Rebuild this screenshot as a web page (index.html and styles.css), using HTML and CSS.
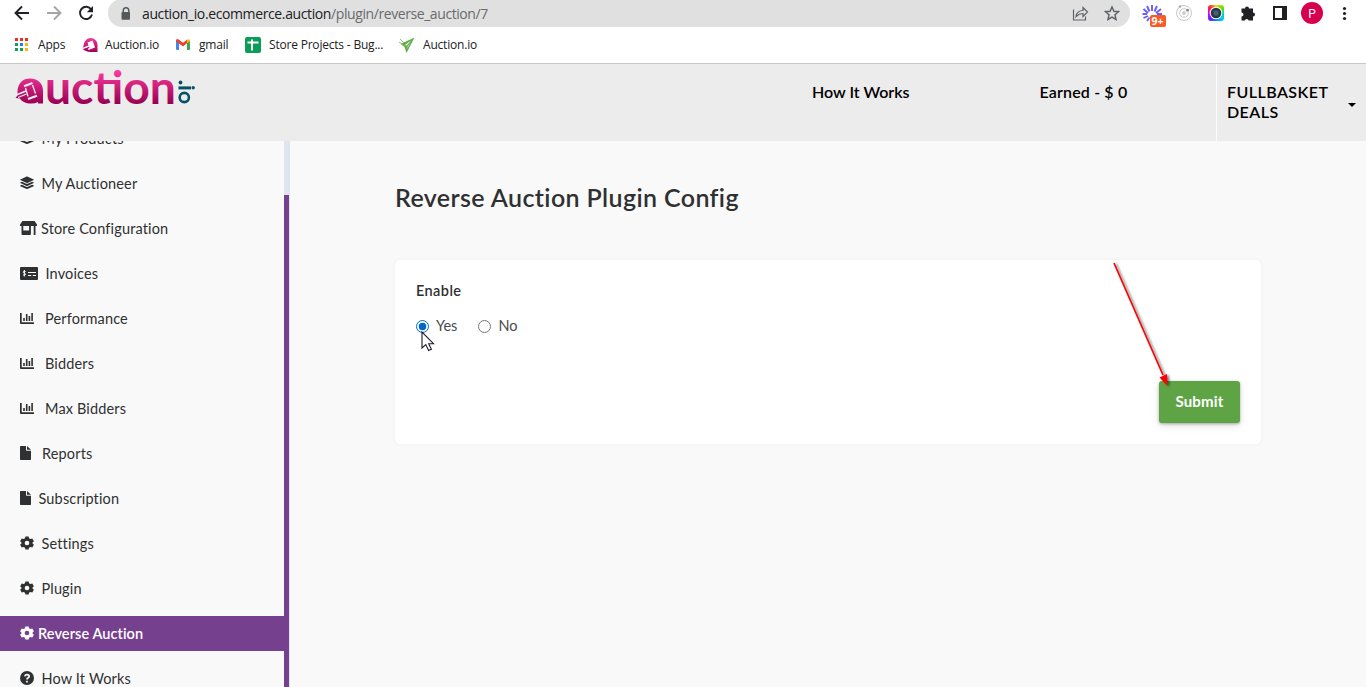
FILE: index.html
```html
<!DOCTYPE html>
<html lang="en">
<head>
<meta charset="utf-8">
<title>Reverse Auction Plugin Config</title>
<link rel="stylesheet" href="styles.css">
</head>
<body>
<svg class="defs" width="0" height="0">
  <symbol id="layers" viewBox="0 0 512 512"><path d="M12 148l232 105q12 5 24 0l232-105q22-12 0-24L268 19q-12-5-24 0L12 124q-22 12 0 24zM500 236l-58-26-158 71q-28 12-56 0L70 210l-58 26q-22 12 0 24l232 105q12 5 24 0l232-105q22-12 0-24zM500 348l-58-26-158 71q-28 12-56 0L70 322l-58 26q-22 12 0 24l232 105q12 5 24 0l232-105q22-12 0-24z"/></symbol>
  <symbol id="store" viewBox="0 0 17 14"><path d="M2.4 0h12.2L17 3.6V5H0V3.6zM1.5 5h1.8v4.6h5.8V5h1.8v8q0 1-1 1H2.5q-1 0-1-1zM13.7 5h1.8v9h-1.8z"/></symbol>
  <symbol id="invoice" viewBox="0 0 18 13"><path d="M1 0h16q1 0 1 1v11q0 1-1 1H1q-1 0-1-1V1q0-1 1-1z"/><path class="cut" d="M8 5.500h8M8 8.500h3.200M12.800 8.500H16M5.600 4.600Q3.2 3.600 3.200 5.100C3.200 6.400 5.600 6 5.600 7.400Q5.400 8.800 3 7.900M4.400 3v6.400"/></symbol>
  <symbol id="chart" viewBox="0 0 14 11"><path d="M0 0h1.7v9.3H14V11H1q-1 0-1-1zM3.2 5h1.6v3H3.2zM5.9 1h1.6v7H5.9zM8.6 3h1.6v5H8.6zM11.3 0h1.6v8h-1.6z"/></symbol>
  <symbol id="file" viewBox="0 0 11 14"><path d="M.7 0H6v4q0 .8.8.8H11v8.5q0 .7-.7.7H.7q-.7 0-.7-.7V.7Q0 0 .7 0zM7 0l4 3.8H7z"/></symbol>
  <symbol id="gear" viewBox="0 0 24 24"><path fill-rule="evenodd" d="M9.2.8h5.6l.7 3.1 2.4 1.4 3.1-1 2.8 4.9L21.500 11.200v1.600l2.300 2.100-2.800 4.900-3.100-1-2.400 1.400-.7 3.100H9.200l-.7-3.100-2.400-1.400-3.100 1L.2 14.900l2.300-2.100v-1.600L.2 9.100 3 4.300l3.100 1L8.500 3.900zM12 8a4 4 0 100 8 4 4 0 000-8z"/></symbol>
  <symbol id="help" viewBox="0 0 14 14"><circle cx="7" cy="7" r="7"/><path class="cut help-mark" d="M4.8 5.4Q5.2 3.600 7 3.600q2.200 0 2.200 1.800C9.200 6.800 7 6.800 7 8.400M7 9.700v1.700"/></symbol>
</svg>

<header class="browser">
  <div class="toolbar">
    <svg class="tool-nav" width="108" height="27" fill="none" stroke="#202124" stroke-width="1.9">
      <path d="M29 13H16M22 6.500L15.500 13l6.500 6.500"/>
      <path stroke="#a4a5a6" d="M47 13h13M54 6.500l6.500 6.500-6.500 6.500"/>
      <path d="M91.200 9.500A6.100 6.100 0 1092 14.500"/><path fill="#202124" stroke="none" d="M93 6v6.200h-6.200z"/>
    </svg>
    <div class="address">
      <svg width="10" height="13" viewBox="0 0 10 13" fill="#55585b"><path fill-rule="evenodd" d="M1.500 5V3.500a3.500 3.500 0 017 0V5Q9 5 9 5.800V12q0 .800-.800.800H1.300Q.5 12.800.5 12V5.800Q.5 5 1.500 5zM3 5h4V3.500a2 2 0 00-4 0z"/></svg>
      <span class="url"><span class="host">auction_io.ecommerce.auction</span>/plugin/reverse_auction/7</span>
      <svg class="address-actions" width="49" height="20" fill="none" stroke="#5f6368" stroke-width="1.200">
        <path d="M1.500 6.500V17h12v-3.500M4 13.500q1-6 7-6V4.500l4.500 4.500-4.500 4.500v-3q-4 0-7 3z"/>
        <path stroke-width="1.500" d="M40 4l1.900 4.300 4.600.4-3.500 3.100 1 4.600-4-2.400-4 2.400 1-4.600-3.500-3.100 4.600-.4z"/>
      </svg>
    </div>
    <svg class="extensions" width="236" height="27">
      <g stroke="#6a5cf6" stroke-width="1.900"><path d="M22 11V5M24.500 11.500l2.500-5.500M26 13l5-4M27 14h5M19.500 11.500L17 6M18 13l-4.500-4M17 14h-4.500M18 16l-4.500 2M19.500 17.500L17 21"/></g>
      <rect x="20" y="15" width="16" height="12" rx="2" fill="#fb5a24"/>
      <text x="21.500" y="25" textLength="12" lengthAdjust="spacingAndGlyphs" class="count">9+</text>
      <g fill="none" stroke="#c9c9c9"><circle cx="54" cy="13" r="7.500"/><circle cx="54" cy="13" r="4.300"/></g><circle cx="54" cy="13" r="2" fill="#cfcfcf"/><circle cx="57.500" cy="10.200" r="1.400" fill="#888"/><circle cx="50" cy="6.500" r="1.300" fill="#aaa"/>
      <foreignObject x="78" y="5" width="16" height="16"><div class="rainbow"></div></foreignObject>
      <circle cx="86" cy="13" r="6.300" fill="#fff"/><circle cx="86" cy="13" r="5.300" fill="#263947"/><circle cx="86" cy="13" r="2.700" fill="#4b5d69"/>
      <path fill="#202124" d="M111.500 8.500h3.500a2 2 0 014 0h4v4a2 2 0 010 4v4h-4.300a2 2 0 00-3.900 0h-3.300v-4a2 2 0 000-4z"/>
      <path fill="none" stroke="#202124" stroke-width="2" d="M144 7h12v12h-12z"/><path fill="#202124" d="M152 6h5v14h-5z"/>
      <circle cx="182" cy="13" r="11" fill="#d6004f"/><text x="182" y="17.500" text-anchor="middle" class="avatar">P</text>
      <g fill="#202124"><circle cx="214.500" cy="8.500" r="1.600"/><circle cx="214.500" cy="13.500" r="1.600"/><circle cx="214.500" cy="18.500" r="1.600"/></g>
    </svg>
  </div>
  <nav class="bookmarks">
    <a class="bm-apps"><svg width="13" height="13"><path fill="#ea2d20" d="M0 0h3v3H0zM5 0h3v3H5zM10 0h3v3h-3z"/><path fill="#12a15b" d="M0 5h3v3H0zM0 10h3v3H0zM5 10h3v3H5z"/><path fill="#1a84f5" d="M5 5h3v3H5z"/><path fill="#fbb60b" d="M10 5h3v3h-3zM10 10h3v3h-3z"/></svg>Apps</a>
    <a class="bm-auction"><svg width="16" height="16" viewBox="0 0 32 32"><use href="#emblem"/></svg>Auction.io</a>
    <a class="bm-gmail"><svg width="14" height="11"><path fill="#4285f4" d="M0 1.500l3 2.200V11H1q-1 0-1-1z"/><path fill="#34a853" d="M11 3.700l3-2.200V10q0 1-1 1h-2z"/><path fill="#ea4335" d="M0 1.500Q.5-.6 2.300.3L7 3.800 11 .8v3.500L7 7.400 0 2.200z"/><path fill="#fbbc04" d="M11 .8q2.500-1.600 3 .7v.8l-3 2z"/></svg>gmail</a>
    <a class="bm-sheet"><svg width="16" height="16"><rect width="16" height="16" rx="2" fill="#0b9d58"/><path d="M2.500 5.500h11M7 2.500v11" stroke="#fff" stroke-width="2"/></svg>Store Projects - Bug...</a>
    <a class="bm-plane"><svg width="16" height="16"><path fill="#62ad48" d="M15.500.5L7.500 16 5.500 9.800 1.500 7z"/><path fill="#fff" d="M12 3.500L6 8l1.500.8z"/><path fill="#fff" d="M12 5L8.800 9.500 8 12z"/><path stroke="#8dbb7c" d="M1 2l4 4M0 5l4 2.500"/></svg>Auction.io</a>
  </nav>
</header>

<header class="site">
  <svg class="logo" width="200" height="60" aria-label="auction.io">
    <defs>
      <linearGradient id="pink" gradientUnits="userSpaceOnUse" x1="0" y1="7" x2="0" y2="40"><stop stop-color="#fc3a9e"/><stop offset="1" stop-color="#970052"/></linearGradient>
      <linearGradient id="pink-mark" x1="0" y1="0" x2="0" y2="1"><stop stop-color="#f5399b"/><stop offset="1" stop-color="#a3005c"/></linearGradient>
      <g id="emblem"><path fill="url(#pink-mark)" d="M3 18C4 8 10 2 17 2c8 0 14 6 14 14v14H18C10 30 4 27 1 23z"/><path fill="#fff" d="M11 11l10-4 4 11-10 4zM0 22l15-6 1 3-14 5zM12 23l13-5 1 3-13 5z"/></g>
    </defs>
    <path fill="url(#pink)" d="M17.500 27C18 19 23 14.500 30 14.500c8 0 13 5 13 12V39.500H38V38q-3 1.500-7 1.500c-5 0-9-1.500-11-5L15.500 34q1-1 2-3z"/>
    <g fill="none" stroke="#f6edf2" stroke-linejoin="round">
      <path stroke-width="1.600" d="M15 31.500l11-4.500"/>
      <path stroke-width="1.100" d="M18 33.500l8.500-3.500"/>
      <path stroke-width="2" d="M24 22.200l8.500-3.200M28 35l9-3.300"/>
      <path stroke-width="1.300" d="M25.500 24l2.500 8.500M32.500 21l3 8.500"/>
    </g>
    <text x="45" y="39.500" textLength="131" lengthAdjust="spacingAndGlyphs" class="wordmark">uction</text>
    <g fill="#075066"><circle cx="180.500" cy="18.500" r="1.900"/><rect x="178.500" y="22.400" width="12.500" height="3"/><circle cx="193.200" cy="23.700" r="1.700"/></g>
    <circle cx="184.300" cy="33.500" r="4.600" fill="none" stroke="#075066" stroke-width="2.600"/>
  </svg>
  <nav class="site-links"><a class="how">How It Works</a><a class="earned">Earned - $ 0</a></nav>
  <div class="account"><span>FULLBASKET<br>DEALS</span><i class="caret"></i></div>
</header>

<div class="body">
  <aside class="sidebar">
    <nav class="menu">
      <a class="wide"><svg width="14" height="14"><use href="#layers"/></svg><span>My Products</span></a>
      <a class="wide"><svg width="14" height="14"><use href="#layers"/></svg><span>My Auctioneer</span></a>
      <a class="tight"><svg width="17" height="14"><use href="#store"/></svg><span>Store Configuration</span></a>
      <a class="wide"><svg width="18" height="13"><use href="#invoice"/></svg><span>Invoices</span></a>
      <a class="wider"><svg width="14" height="11"><use href="#chart"/></svg><span>Performance</span></a>
      <a class="wider"><svg width="14" height="11"><use href="#chart"/></svg><span>Bidders</span></a>
      <a class="wider"><svg width="14" height="11"><use href="#chart"/></svg><span>Max Bidders</span></a>
      <a class="wider"><svg width="11" height="14"><use href="#file"/></svg><span>Reports</span></a>
      <a class="wide"><svg width="11" height="14"><use href="#file"/></svg><span>Subscription</span></a>
      <a class="wide"><svg width="14" height="14"><use href="#gear"/></svg><span>Settings</span></a>
      <a class="wide"><svg width="14" height="14"><use href="#gear"/></svg><span>Plugin</span></a>
      <a class="tight active"><svg width="14" height="14"><use href="#gear"/></svg><span>Reverse Auction</span></a>
      <a class="wide"><svg width="14" height="14"><use href="#help"/></svg><span>How It Works</span></a>
    </nav>
    <div class="scrollbar"><div class="thumb"></div></div>
  </aside>
  <main>
    <h1>Reverse Auction Plugin Config</h1>
    <form class="card">
      <h2>Enable</h2>
      <div class="options">
        <label><input type="radio" name="enable" checked>Yes</label>
        <label><input type="radio" name="enable">No</label>
      </div>
      <button type="button">Submit</button>
    </form>
  </main>
</div>

<svg class="cursor" width="14" height="21"><path d="M1 1v16l3.800-3.400L7.600 19.500l2.800-1.300-2.700-5.500H12.500z" fill="#fff" stroke="#1b1b28" stroke-width="1.100"/></svg>
<svg class="arrow" width="70" height="140"><path d="M4 3l49 112" stroke="#f00" stroke-width="1.700"/><path fill="#f00" d="M57.500 126l-8-8.500 7.500-3.500z"/></svg>
</body>
</html>
```
FILE: styles.css
```css
* { box-sizing: border-box; }
body { margin: 0; height: 687px; overflow: hidden; display: flex; flex-direction: column; background: #f9f9f9; color: #2f3031; font-family: Lato, "Open Sans", sans-serif; position: relative; }
svg { flex: none; display: block; }
.defs { position: absolute; }
.cut { fill: none; stroke: #f9f9f9; stroke-width: 1; }
.help-mark { stroke-width: 1.700; }

.browser { height: 64px; flex: none; background: #fff; border-bottom: 1px solid #c8c8c9; font-family: "Open Sans", sans-serif; color: #202124; }
.toolbar { display: flex; height: 27px; }
.address { width: 1022px; background: #e0e0e0; border-radius: 14px; margin-top: -1px; height: 28px; display: flex; align-items: center; padding: 0 9px 0 13px; }
.url { margin-left: 11px; font-size: 14px; letter-spacing: -.42px; color: #696b6e; white-space: nowrap; }
.host { color: #202124; letter-spacing: -.38px; }
.address-actions { margin-left: auto; }
.count { font: bold 11px "Open Sans", sans-serif; fill: #fff; }
.avatar { font: 12px Roboto, sans-serif; fill: #fff; }
.rainbow { width: 16px; height: 16px; border-radius: 3px; background: conic-gradient(#ffd400, #7fe000 12%, #00d890 25%, #00c8ff 37%, #0080ff 50%, #6a20ff 62%, #e000ff 75%, #ff2040 87%, #ffd400); }
.bookmarks { display: flex; height: 35px; padding-left: 15px; font-size: 12px; }
.bookmarks a { display: flex; align-items: center; white-space: nowrap; letter-spacing: -.2px; }
.bookmarks .bm-apps { width: 67px; gap: 10px; }
.bm-auction { width: 94px; gap: 7px; }
.bm-gmail { width: 69px; gap: 9px; }
.bm-sheet { width: 154px; gap: 8px; }
.bm-plane { gap: 8px; }

.site { height: 77px; flex: none; display: flex; background: #ececec; color: #000; font-size: 16px; font-weight: 600; line-height: 20px; }
.wordmark { font: 700 45px/1 Lato, sans-serif; fill: url(#pink); }
.site-links { display: flex; flex: 1; padding: 18px 0 0 612px; white-space: nowrap; }
.how { width: 227.500px; }
.earned { letter-spacing: .15px; }
.account { width: 150px; border-left: 1px solid #fbfbfb; padding: 18px 10px 0 10px; display: flex; justify-content: space-between; letter-spacing: .45px; }
.caret { margin: 21px 0 0; width: 8px; height: 4px; border: 4px solid transparent; border-top-color: #000; border-bottom: 0; }

.body { flex: 1; min-height: 0; display: flex; }
.sidebar { width: 290px; display: flex; overflow: hidden; flex: none; }
.menu { width: 284px; display: flex; flex-direction: column; gap: 10px; margin-top: -20px; }
.menu a { height: 35px; flex: none; display: flex; align-items: center; padding: 0 0 1px 20px; fill: #2f3031; font-size: 14.500px; white-space: nowrap; letter-spacing: .15px; }
.menu a.wide { gap: 7.500px; }
.menu a.wider { gap: 11px; }
.menu a.tight { gap: 4px; }
.menu a.active { background: #75418e; color: #fff; fill: #fff; font-weight: 600; letter-spacing: .08px; }
.scrollbar { width: 6px; background: #dfe4ed; }
.thumb { margin-top: 54px; width: 5px; height: 500px; background: #75418e; }

main { flex: 1; padding: 40px 105px 0; }
h1 { margin: 0; font-size: 25px; line-height: 32px; font-weight: 600; letter-spacing: .38px; font-variant-ligatures: none; white-space: nowrap; }
.card { margin-top: 47px; width: 866px; height: 184px; background: #fff; border-radius: 5px; box-shadow: 0 0 4px rgba(0,0,0,.05); padding: 21px; display: flex; flex-direction: column; }
h2 { margin: 0; font-size: 14.500px; line-height: 20px; font-weight: 600; letter-spacing: .4px; }
.options { display: flex; gap: 21px; margin-top: 15px; font-size: 14.500px; line-height: 20px; color: #4a4a4a; }
label { display: flex; align-items: center; gap: 7px; }
input { appearance: none; margin: 0; width: 13px; height: 13px; border: 1px solid #767676; border-radius: 50%; background: #fff; }
input:checked { border-color: #0067cb; background: radial-gradient(circle, #0067cb 3.500px, #fff 4.200px); }
button { align-self: flex-end; margin-top: 45px; flex: none; width: 81px; height: 42px; padding: 0 0 3px; border: 0; border-radius: 3px; background: #5ea445; color: #fff; font: bold 15px Lato, sans-serif; letter-spacing: .2px; box-shadow: 0 1px 3px rgba(0,0,0,.3), 0 3px 8px rgba(0,0,0,.1); }
.cursor { position: absolute; left: 421px; top: 331px; }
.arrow { position: absolute; left: 1110px; top: 260px; filter: drop-shadow(2px 1px 1px rgba(0,0,0,.5)); }
```
